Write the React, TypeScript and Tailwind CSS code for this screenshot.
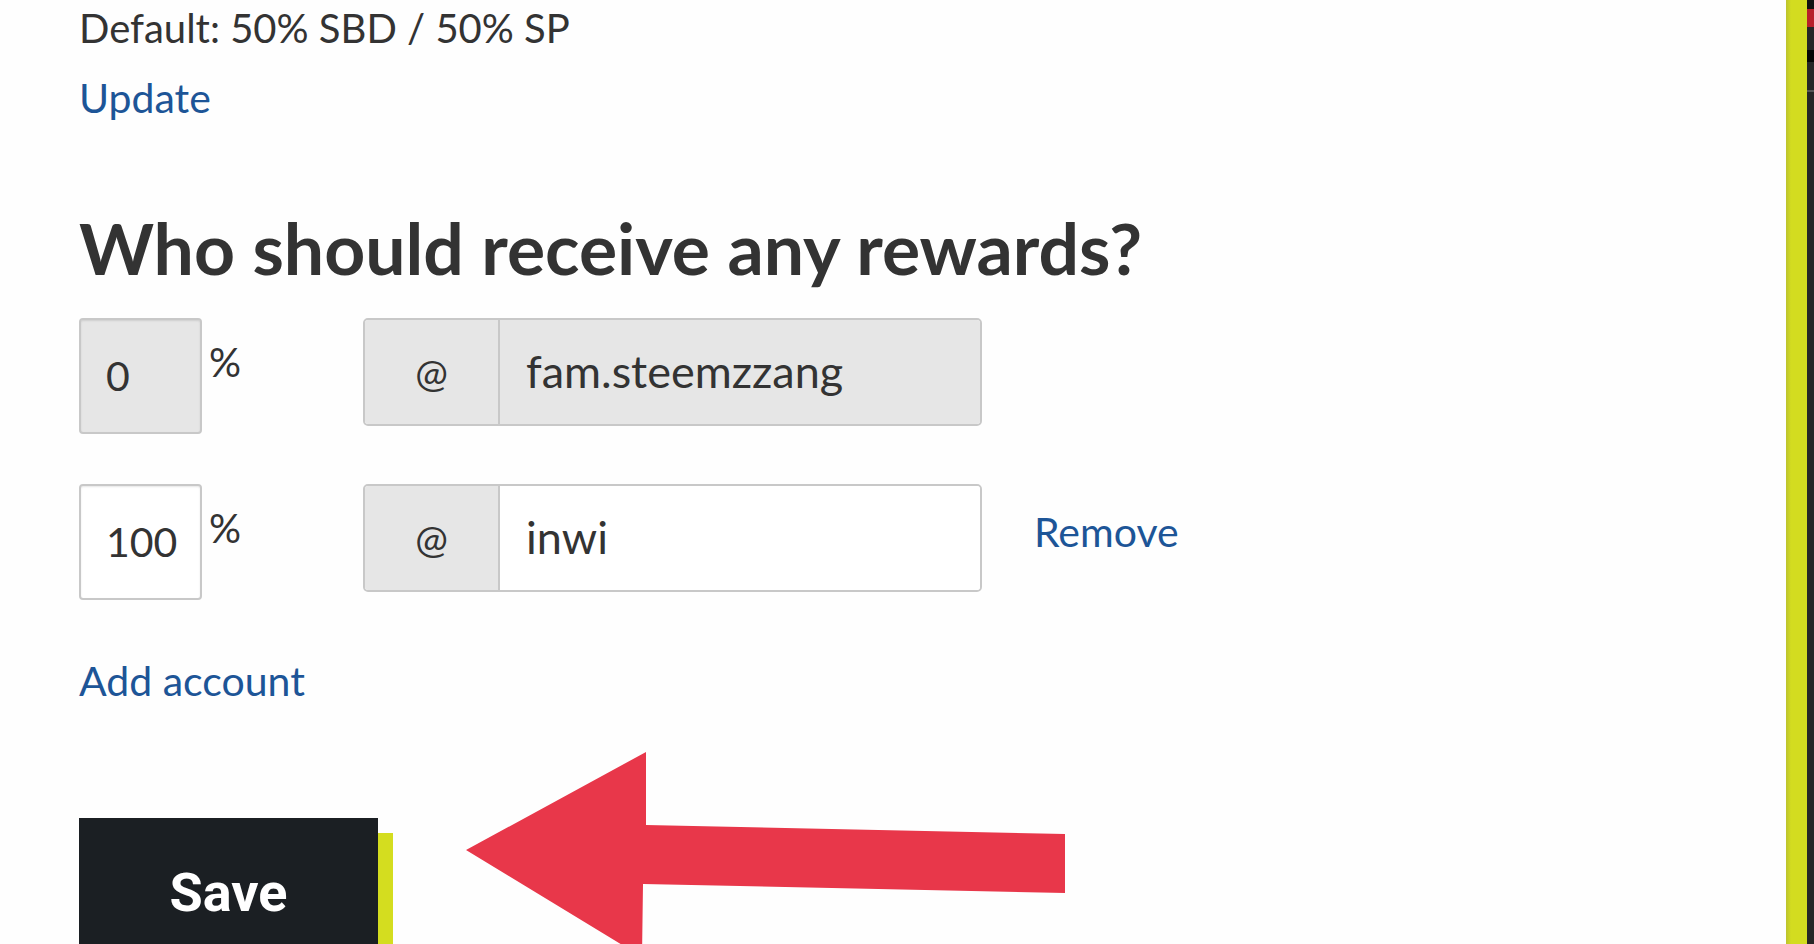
import React from 'react'

type RowProps = {
    pct: string
    name: string
    locked?: boolean
}

const BeneficiaryRow: React.FC<RowProps> = ({pct, name, locked}) => {
    return (
        <div className="flex items-start h-[116px]">
            <div className="w-[284px] flex items-start">
                <div className={`w-[123px] h-[116px] border-2 border-[#c8c8c8] rounded-[4px] shadow-[inset_0_1px_2px_rgba(0,0,0,0.1)] flex items-center pl-[25px] text-[41px] ${locked ? 'bg-[#e6e6e6]' : 'bg-white'}`}>
                    {pct}
                </div>
                <span className="ml-[7px] mt-[24px] text-[40px] leading-[40px]">%</span>
            </div>

            <div className="w-[619px] h-[108px] border-2 border-[#c8c8c8] rounded-[5px] flex overflow-hidden">
                <div className="w-[135px] bg-[#e6e6e6] border-r-2 border-[#c8c8c8] flex items-center justify-center text-[39px]">
                    @
                </div>
                <div className={`flex-1 flex items-center pl-[26px] text-[45px] ${locked ? 'bg-[#e6e6e6]' : 'bg-white'}`}>
                    {name}
                </div>
            </div>

            {!locked && (
                <a className="ml-[52px] mt-[20px] text-[41px] leading-[56px] text-[#1d5597] cursor-pointer">
                    Remove
                </a>
            )}
        </div>
    )
}

export default function App() {
    return (
        <div className="relative w-[1814px] h-[944px] overflow-hidden bg-[#fefefe] flex font-['Lato',sans-serif] text-[#333]">
            <div className="flex-1 pl-[79px]">
                <p className="text-[40px] leading-[56px]">Default: 50% SBD / 50% SP</p>
                <a className="block w-fit mt-[14px] text-[41px] leading-[56px] text-[#1d5597] cursor-pointer">Update</a>

                <h2 className="mt-[81px] text-[71.5px] leading-[80px] font-bold">Who should receive any rewards?</h2>

                <div className="mt-[31px] flex flex-col gap-[50px]">
                    <BeneficiaryRow pct="0" name="fam.steemzzang" locked />
                    <BeneficiaryRow pct="100" name="inwi" />
                </div>

                <a className="block w-fit mt-[53px] text-[41px] leading-[56px] text-[#1d5597] cursor-pointer">Add account</a>

                <button className="mt-[109px] w-[299px] h-[148px] bg-[#1b1f23] text-white font-['Roboto',sans-serif] font-bold text-[54px] flex items-center justify-center shadow-[15px_15px_0_0_#d4dd1f]">
                    Save
                </button>
            </div>

            {/* side edge of the next frame */}
            <div className="w-[21px] h-full bg-[linear-gradient(to_right,#bcc22e,#d3dc20_5px)]" />
            <div className="w-[7px] h-full bg-[#262626] flex flex-col">
                <div className="h-[9px] bg-[#111]" />
                <div className="h-[18px] bg-[#b8202a]" />
                <div className="h-[23px]" />
                <div className="h-[12px] bg-[#050505]" />
                <div className="mt-[28px] h-[2px] bg-[#555]" />
            </div>

            {/* red annotation arrow */}
            <svg className="absolute left-0 top-0 pointer-events-none" width="1100" height="944" viewBox="0 0 1100 944">
                <polygon points="466,850 646,752 646,825 1065,834 1065,893 643,884 642,957" fill="#e8374a" />
            </svg>
        </div>
    )
}
